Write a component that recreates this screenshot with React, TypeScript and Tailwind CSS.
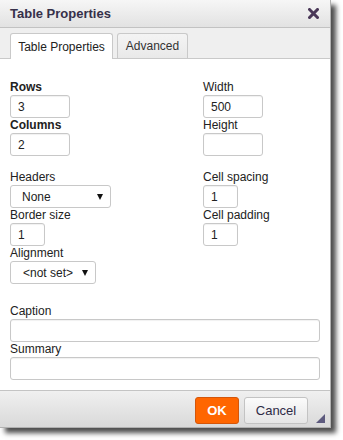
import React from "react";

type FieldProps = {
  label: string;
  value?: string;
  width: string;
  bold?: boolean;
};

function Field({ label, value, width, bold }: FieldProps) {
  return (
    <div className="flex flex-col">
      <label
        className={`h-[15px] leading-[15px] text-[12px] text-[#222] ${
          bold ? "font-bold" : ""
        }`}
      >
        {label}
      </label>
      <div
        className={`${width} h-[23px] border border-[#c8c8c8] rounded-[3px] bg-white pl-[7px] flex items-center text-[12px] text-[#222] shadow-[inset_0_1px_1px_rgba(0,0,0,0.06)]`}
      >
        {value}
      </div>
    </div>
  );
}

type SelectProps = {
  label: string;
  value: string;
  width: string;
  padLeft: string;
};

function SelectField({ label, value, width, padLeft }: SelectProps) {
  return (
    <div className="flex flex-col">
      <label className="h-[15px] leading-[15px] text-[12px] text-[#222]">
        {label}
      </label>
      <div
        className={`${width} h-[23px] border border-[#c8c8c8] rounded-[3px] bg-white ${padLeft} pr-[7px] flex items-center justify-between text-[12px] text-[#222]`}
      >
        <span>{value}</span>
        <svg width="6" height="6" viewBox="0 0 6 6">
          <polygon points="0,0 6,0 3,6" fill="#111" />
        </svg>
      </div>
    </div>
  );
}

export default function App() {
  return (
    <div className="w-[343px] h-[440px] bg-white font-[family-name:'Liberation_Sans',Arial,sans-serif]">
      <div className="relative w-[331px] flex flex-col bg-white border-r border-b border-[#b0b0b0] shadow-[5px_5px_5px_rgba(0,0,0,0.7)]">
        {/* title bar */}
        <div className="h-[28px] flex items-center justify-between pl-[10px] pr-[11px] border-b border-[#c2c2c2] bg-gradient-to-b from-[#f6f6f6] to-[#e2e2e2]">
          <span className="text-[13px] font-bold text-[#36304a]">
            Table Properties
          </span>
          <svg width="11" height="11" viewBox="0 0 11 11">
            <path
              d="M1.5 1.5 L9.5 9.5 M9.5 1.5 L1.5 9.5"
              stroke="#4a3858"
              strokeWidth="3"
              strokeLinecap="square"
            />
          </svg>
        </div>

        {/* tabs */}
        <div className="h-[31px] flex items-end gap-[4px] pl-[10px] bg-[#efefef] border-b border-[#c9c9c9]">
          <div className="w-[103px] h-[26px] -mb-px flex items-center justify-center bg-white border border-b-0 border-[#c9c9c9] rounded-t-[3px] text-[12px] text-[#222]">
            Table Properties
          </div>
          <div className="w-[71px] h-[25px] flex items-center justify-center bg-gradient-to-b from-[#f4f4f4] to-[#e9e9e9] border border-b-0 border-[#c9c9c9] rounded-t-[3px] text-[12px] text-[#333]">
            Advanced
          </div>
        </div>

        {/* content */}
        <div className="h-[331px] flex flex-col pt-[21px] px-[10px]">
          <div className="flex">
            <div className="w-[193px] flex flex-col">
              <Field label="Rows" value="3" width="w-[60px]" bold />
              <Field label="Columns" value="2" width="w-[60px]" bold />
              <div className="mt-[14px]">
                <SelectField
                  label="Headers"
                  value="None"
                  width="w-[101px]"
                  padLeft="pl-[11px]"
                />
              </div>
              <Field label="Border size" value="1" width="w-[35px]" />
              <SelectField
                label="Alignment"
                value="<not set>"
                width="w-[86px]"
                padLeft="pl-[12px]"
              />
            </div>
            <div className="flex flex-col">
              <Field label="Width" value="500" width="w-[60px]" />
              <Field label="Height" width="w-[60px]" />
              <div className="mt-[14px]">
                <Field label="Cell spacing" value="1" width="w-[35px]" />
              </div>
              <Field label="Cell padding" value="1" width="w-[35px]" />
            </div>
          </div>

          <div className="mt-[20px] flex flex-col">
            <Field label="Caption" width="w-[310px]" />
            <Field label="Summary" width="w-[310px]" />
          </div>
        </div>

        {/* footer */}
        <div className="h-[37px] flex items-start justify-end gap-[5px] pt-[6px] pr-[22px] border-t border-[#c4c4c4] bg-gradient-to-b from-[#f0f0f0] to-[#d9d9d9]">
          <button className="w-[44px] h-[27px] bg-[#ff6600] border border-[#d4560a] rounded-[3px] text-white text-[13px] font-bold">
            OK
          </button>
          <button className="w-[64px] h-[27px] bg-gradient-to-b from-[#fbfbfb] to-[#e6e6e6] border border-[#c3c3c3] rounded-[3px] text-[#2e2b46] text-[13px]">
            Cancel
          </button>
        </div>

        <svg
          className="absolute right-[5px] bottom-[4px]"
          width="9"
          height="9"
          viewBox="0 0 9 9"
        >
          <polygon points="9,0 9,9 0,9" fill="#5d5a7e" />
        </svg>
      </div>
    </div>
  );
}
